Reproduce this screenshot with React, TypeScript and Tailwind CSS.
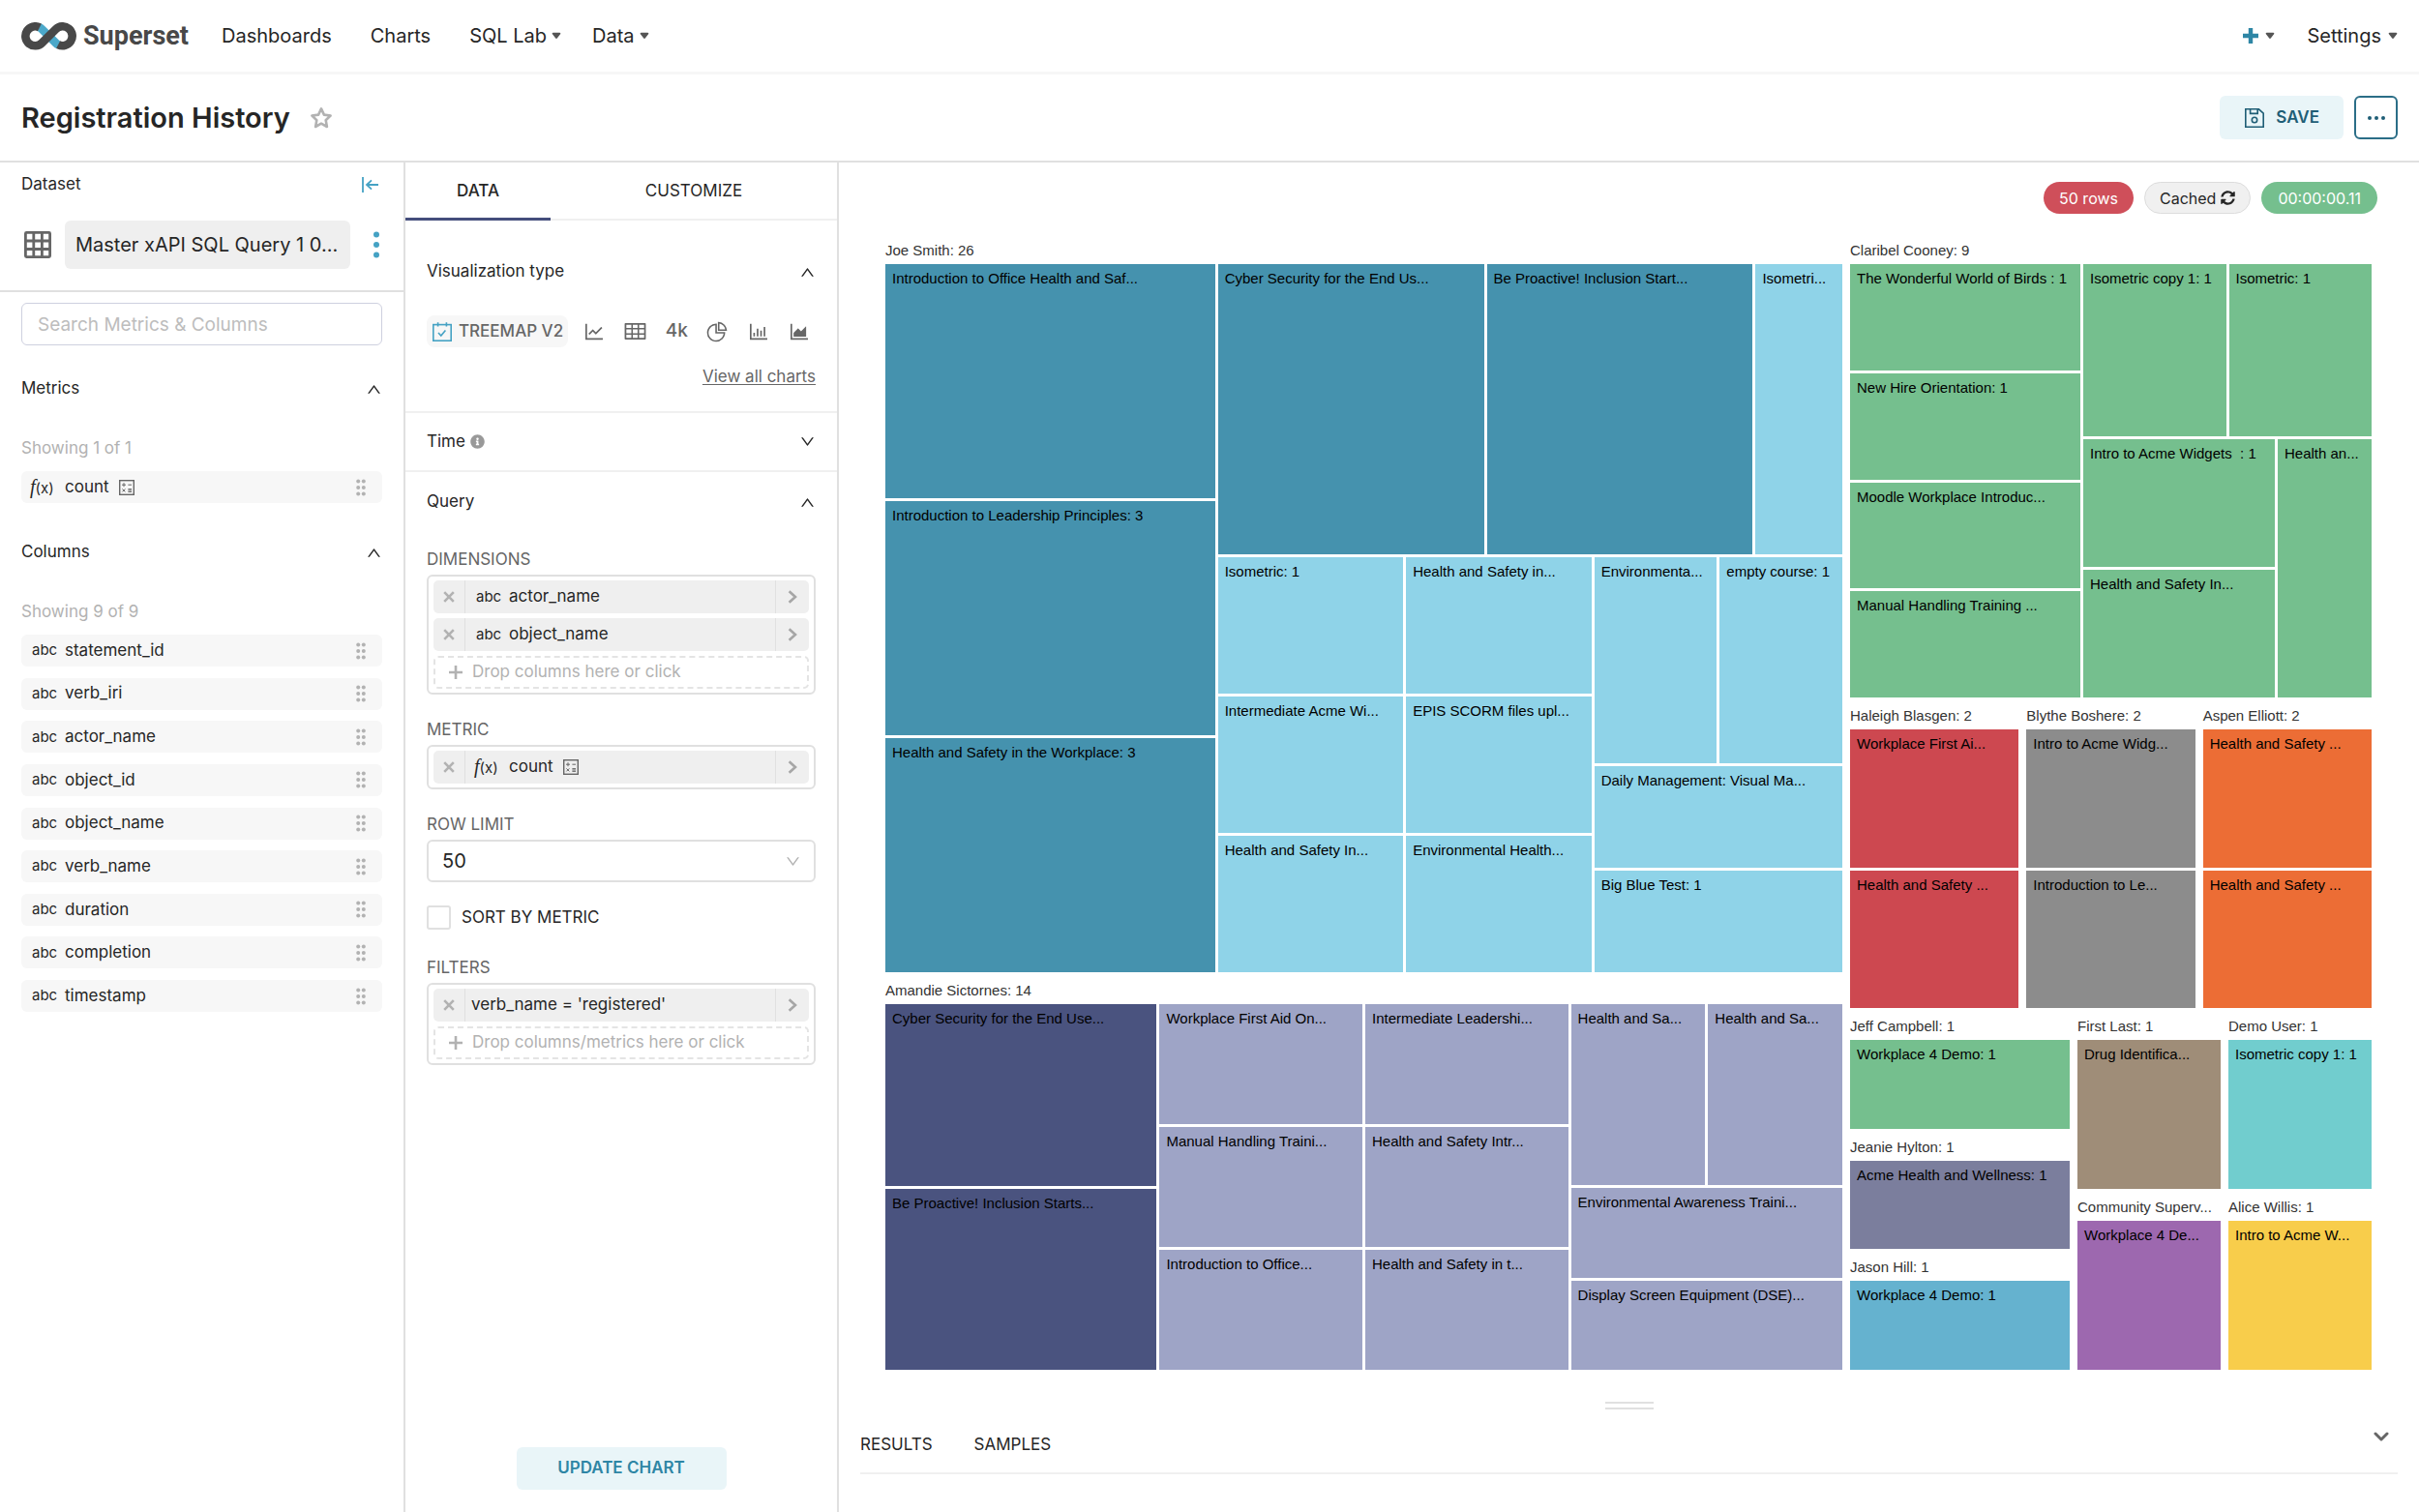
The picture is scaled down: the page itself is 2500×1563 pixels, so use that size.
import type { CSSProperties, ReactNode } from 'react';
import {
  AiOutlineAreaChart,
  AiOutlineBarChart,
  AiOutlineDown,
  AiOutlineLineChart,
  AiOutlinePieChart,
  AiOutlineTable,
  AiOutlineUp,
} from 'react-icons/ai';
import { FaInfoCircle, FaSyncAlt } from 'react-icons/fa';
import clsx from 'clsx';

interface Tile {
  size: number;
  label?: string;
  color?: string;
  /** A titled group gets a heading above its tiles. */
  title?: string;
  dir?: 'row' | 'col';
  wide?: boolean;
  children?: Tile[];
}

const TEAL = 'bg-[#4592ae]';
const SKY = 'bg-[#8fd3e8]';
const NAVY = 'bg-[#4a537f]';
const LAVENDER = 'bg-[#9ea4c6]';
const GREEN = 'bg-[#75bf8e]';
const RED = 'bg-[#cd4850]';
const GRAY = 'bg-[#8c8c8c]';
const ORANGE = 'bg-[#ec6d35]';

const leaf = (size: number, label: string, color: string): Tile => ({ size, label, color });
const col = (size: number, children: Tile[]): Tile => ({ size, dir: 'col', children });
const row = (size: number, children: Tile[]): Tile => ({ size, dir: 'row', children });
const group = (size: number, title: string, dir: 'row' | 'col', children: Tile[]): Tile => ({
  size,
  title,
  dir,
  children,
});

const treemap: Tile = {
  size: 1,
  dir: 'row',
  wide: true,
  children: [
    {
      size: 989,
      dir: 'col',
      wide: true,
      children: [
        group(760, 'Joe Smith: 26', 'row', [
          col(341, [
            leaf(1, 'Introduction to Office Health and Saf...', TEAL),
            leaf(1, 'Introduction to Leadership Principles: 3', TEAL),
            leaf(1, 'Health and Safety in the Workplace: 3', TEAL),
          ]),
          col(646, [
            row(300, [
              leaf(276, 'Cyber Security for the End Us...', TEAL),
              leaf(276, 'Be Proactive! Inclusion Start...', TEAL),
              leaf(90, 'Isometri...', SKY),
            ]),
            row(429, [
              col(192, [
                leaf(1, 'Isometric: 1', SKY),
                leaf(1, 'Intermediate Acme Wi...', SKY),
                leaf(1, 'Health and Safety In...', SKY),
              ]),
              col(192, [
                leaf(1, 'Health and Safety in...', SKY),
                leaf(1, 'EPIS SCORM files upl...', SKY),
                leaf(1, 'Environmental Health...', SKY),
              ]),
              col(257, [
                row(214, [leaf(1, 'Environmenta...', SKY), leaf(1, 'empty course: 1', SKY)]),
                leaf(106, 'Daily Management: Visual Ma...', SKY),
                leaf(106, 'Big Blue Test: 1', SKY),
              ]),
            ]),
          ]),
        ]),
        group(406, 'Amandie Sictornes: 14', 'row', [
          col(281, [
            leaf(1, 'Cyber Security for the End Use...', NAVY),
            leaf(1, 'Be Proactive! Inclusion Starts...', NAVY),
          ]),
          col(210, [
            leaf(1, 'Workplace First Aid On...', LAVENDER),
            leaf(1, 'Manual Handling Traini...', LAVENDER),
            leaf(1, 'Introduction to Office...', LAVENDER),
          ]),
          col(210, [
            leaf(1, 'Intermediate Leadershi...', LAVENDER),
            leaf(1, 'Health and Safety Intr...', LAVENDER),
            leaf(1, 'Health and Safety in t...', LAVENDER),
          ]),
          col(281, [
            row(188, [leaf(1, 'Health and Sa...', LAVENDER), leaf(1, 'Health and Sa...', LAVENDER)]),
            leaf(93, 'Environmental Awareness Traini...', LAVENDER),
            leaf(93, 'Display Screen Equipment (DSE)...', LAVENDER),
          ]),
        ]),
      ],
    },
    {
      size: 539,
      dir: 'col',
      wide: true,
      children: [
        group(476, 'Claribel Cooney: 9', 'row', [
          col(238, [
            leaf(1, 'The Wonderful World of Birds : 1', GREEN),
            leaf(1, 'New Hire Orientation: 1', GREEN),
            leaf(1, 'Moodle Workplace Introduc...', GREEN),
            leaf(1, 'Manual Handling Training ...', GREEN),
          ]),
          col(298, [
            row(178, [leaf(1, 'Isometric copy 1: 1', GREEN), leaf(1, 'Isometric: 1', GREEN)]),
            row(267, [
              col(198, [leaf(1, 'Intro to Acme Widgets  : 1', GREEN), leaf(1, 'Health and Safety In...', GREEN)]),
              leaf(97, 'Health an...', GREEN),
            ]),
          ]),
        ]),
        {
          size: 316,
          dir: 'row',
          wide: true,
          children: [
            group(1, 'Haleigh Blasgen: 2', 'col', [
              leaf(1, 'Workplace First Ai...', RED),
              leaf(1, 'Health and Safety ...', RED),
            ]),
            group(1, 'Blythe Boshere: 2', 'col', [
              leaf(1, 'Intro to Acme Widg...', GRAY),
              leaf(1, 'Introduction to Le...', GRAY),
            ]),
            group(1, 'Aspen Elliott: 2', 'col', [
              leaf(1, 'Health and Safety ...', ORANGE),
              leaf(1, 'Health and Safety ...', ORANGE),
            ]),
          ],
        },
        {
          size: 369,
          dir: 'row',
          wide: true,
          children: [
            {
              size: 227,
              dir: 'col',
              wide: true,
              children: [
                group(1, 'Jeff Campbell: 1', 'col', [leaf(1, 'Workplace 4 Demo: 1', GREEN)]),
                group(1, 'Jeanie Hylton: 1', 'col', [leaf(1, 'Acme Health and Wellness: 1', 'bg-[#7b7e9d]')]),
                group(1, 'Jason Hill: 1', 'col', [leaf(1, 'Workplace 4 Demo: 1', 'bg-[#65b2cf]')]),
              ],
            },
            {
              size: 148,
              dir: 'col',
              wide: true,
              children: [
                group(1, 'First Last: 1', 'col', [leaf(1, 'Drug Identifica...', 'bg-[#9f8d78]')]),
                group(1, 'Community Superv...', 'col', [leaf(1, 'Workplace 4 De...', 'bg-[#9d68af]')]),
              ],
            },
            {
              size: 148,
              dir: 'col',
              wide: true,
              children: [
                group(1, 'Demo User: 1', 'col', [leaf(1, 'Isometric copy 1: 1', 'bg-[#71cdce]')]),
                group(1, 'Alice Willis: 1', 'col', [leaf(1, 'Intro to Acme W...', 'bg-[#f8cd4b]')]),
              ],
            },
          ],
        },
      ],
    },
  ],
};

const columns = [
  'statement_id',
  'verb_iri',
  'actor_name',
  'object_id',
  'object_name',
  'verb_name',
  'duration',
  'completion',
  'timestamp',
];

function TreemapNode({ node }: { node: Tile }) {
  const style: CSSProperties = { flexGrow: node.size };

  if (!node.children) {
    return (
      <div style={style} className={clsx('min-h-0 min-w-0 basis-0 overflow-hidden', node.color)}>
        {/* the padding sits inside, so that it does not count in the tile's flex size */}
        <div className="whitespace-pre pl-[7px] pt-[5px] text-[15px] leading-5 text-black">{node.label}</div>
      </div>
    );
  }

  const tiles = node.children.map((child, i) => <TreemapNode key={i} node={child} />);
  const direction = node.dir === 'row' ? 'flex-row' : 'flex-col';

  if (node.title) {
    return (
      <section style={style} className="flex min-h-0 min-w-0 basis-0 flex-col">
        <h3 className="h-7 shrink-0 whitespace-nowrap text-[15px] leading-7 text-[#333333]">{node.title}</h3>
        <div className={clsx('flex min-h-0 flex-1 gap-[3px]', direction)}>{tiles}</div>
      </section>
    );
  }

  return (
    <div
      style={style}
      className={clsx(
        'flex min-h-0 min-w-0 basis-0',
        direction,
        node.wide ? 'gap-x-2 gap-y-[5px]' : 'gap-[3px]',
      )}
    >
      {tiles}
    </div>
  );
}

function Caret() {
  return (
    <svg viewBox="0 0 10 8" className="h-2 w-[10px] fill-[#555555]" aria-hidden="true">
      <path d="M1.6 0.8h6.8c0.9 0 1.2 0.9 0.7 1.5L5.8 6.6c-0.4 0.5-1.2 0.5-1.6 0L0.9 2.3C0.4 1.7 0.7 0.8 1.6 0.8z" />
    </svg>
  );
}

function Logo() {
  return (
    <a href="#" className="flex items-center gap-[7px]">
      <svg viewBox="0 0 57 29" className="h-[29px] w-[57px]" fill="none" strokeWidth="8.6" aria-hidden="true">
        <path d="M18.5 5.2A10 10 0 0 1 21.4 7.2L35.6 21.4A10 10 0 0 0 38.5 23.4" stroke="#4ba8c9" />
        <path d="M18.9 5.4A10 10 0 1 0 21.4 21.4L35.6 7.2A10 10 0 1 1 38.1 23.2" stroke="#484848" />
      </svg>
      <span className="font-['Roboto',sans-serif] text-[27px] font-bold leading-8 text-[#484848]">Superset</span>
    </a>
  );
}

function DatasetIcon() {
  return (
    <svg viewBox="0 0 28 28" className="size-7" fill="none" stroke="#666666" strokeWidth="2.8" aria-hidden="true">
      <rect x="1.4" y="1.4" width="25.2" height="25.2" rx="1" />
      <path d="M1 10h26M1 18.5h26M9.8 1v26M18.4 1v26" />
    </svg>
  );
}

function CalendarIcon() {
  return (
    <svg viewBox="0 0 20 20" className="size-5" fill="none" stroke="#45a2c4" strokeWidth="1.6" aria-hidden="true">
      <rect x="0.8" y="2.6" width="18.4" height="16.6" />
      <path d="M5.6 0.2v4.2M14.4 0.2v4.2M6 11l2.8 3 4.6-5.6" />
    </svg>
  );
}

function CalculatorIcon() {
  return (
    <svg viewBox="0 0 16 16" className="size-4" fill="none" stroke="#666666" aria-hidden="true">
      <rect x="0.7" y="0.7" width="14.6" height="14.6" strokeWidth="1.4" />
      <path d="M3 5.2h4M5 3.2v4M9.4 5.2h3.6M3.4 9.4l3 3M6.4 9.4l-3 3M9.4 9.6h3.6M9.4 11h3.6M9.4 12.4h3.6" />
    </svg>
  );
}

function DragHandle() {
  return (
    <svg viewBox="0 0 10 18" className="h-[18px] w-[10px] fill-[#b2b2b2]" aria-hidden="true">
      {[2.5, 9, 15.5].map(y => (
        <g key={y}>
          <circle cx="2.2" cy={y} r="2" />
          <circle cx="7.8" cy={y} r="2" />
        </g>
      ))}
    </svg>
  );
}

function CollapseIcon() {
  return (
    <svg viewBox="0 0 18 16" className="h-4 w-[18px]" fill="none" stroke="#45a2c4" strokeWidth="1.8" aria-hidden="true">
      <path d="M1 0v16M5 8h12M10 3.4L5 8l5 4.6" />
    </svg>
  );
}

function SaveIcon() {
  return (
    <svg viewBox="0 0 20 20" className="size-5" fill="none" stroke="#1f5e76" strokeWidth="1.6" aria-hidden="true">
      <path d="M0.8 0.8h13.6l4.8 4.4v14H0.8z" />
      <path d="M5.6 1v4.4h7.6V1" />
      <circle cx="10" cy="12" r="2.7" />
    </svg>
  );
}

function FunctionLabel() {
  return (
    <span className="-ml-0.5 w-[26px] whitespace-nowrap text-[15px] leading-5">
      <i className="font-['Liberation_Serif',serif] text-[20px]">f</i>(x)
    </span>
  );
}

function TypeLabel() {
  return <span className="w-6 text-[15px]">abc</span>;
}

function SectionHeading({ title, open = true, children }: { title: string; open?: boolean; children?: ReactNode }) {
  const Chevron = open ? AiOutlineUp : AiOutlineDown;
  return (
    <button type="button" aria-expanded={open} className="flex h-6 w-full items-center gap-[5px] text-left text-[17px]">
      {title}
      {children}
      <Chevron size={17} className="ml-auto" />
    </button>
  );
}

function FieldRow({ children }: { children: ReactNode }) {
  return (
    <li className="flex h-[33px] items-center gap-[10px] rounded-md bg-[#f7f7f7] pl-[11px] pr-[17px] text-[17px]">
      {children}
      <span className="ml-auto">
        <DragHandle />
      </span>
    </li>
  );
}

function ControlLabel({ children }: { children: ReactNode }) {
  return <h3 className="h-5 text-[17px] leading-5 text-[#666666]">{children}</h3>;
}

function DropBox({ children }: { children: ReactNode }) {
  return (
    <div className="mt-[6px] flex flex-col gap-[5px] rounded-md border-2 border-[#e0e0e0] px-[5px] py-1">{children}</div>
  );
}

function Pill({ children, narrow }: { children: ReactNode; narrow?: boolean }) {
  return (
    <div className="flex h-[34px] items-stretch rounded-[5px] bg-[#efefef] text-[17px]">
      <button type="button" aria-label="Remove" className="flex w-[33px] items-center justify-center border-r border-[#e0e0e0]">
        <svg viewBox="0 0 12 12" className="size-3" stroke="#b2b2b2" strokeWidth="2.6" aria-hidden="true">
          <path d="M1.2 1.2l9.6 9.6M10.8 1.2l-9.6 9.6" />
        </svg>
      </button>
      <div className={clsx('flex flex-1 items-center gap-[10px]', narrow ? 'pl-[6px]' : 'pl-[11px]')}>{children}</div>
      <button type="button" aria-label="Edit" className="flex w-[35px] items-center justify-center border-l border-[#e0e0e0]">
        <svg viewBox="0 0 10 14" className="h-[14px] w-[10px]" fill="none" stroke="#a6a6a6" strokeWidth="2.6" aria-hidden="true">
          <path d="M1.6 1.2L8 7l-6.4 5.8" />
        </svg>
      </button>
    </div>
  );
}

function DropTarget({ children }: { children: ReactNode }) {
  return (
    <button
      type="button"
      className="flex h-[34px] items-center gap-[10px] rounded-[5px] border-2 border-dashed border-[#e4e4e4] pl-[14px] text-[17px] text-[#b2b2b2]"
    >
      <svg viewBox="0 0 14 14" className="size-[14px]" stroke="#b2b2b2" strokeWidth="2.6" aria-hidden="true">
        <path d="M7 0v14M0 7h14" />
      </svg>
      {children}
    </button>
  );
}

function NavBar() {
  return (
    <header className="flex h-[77px] items-center justify-between border-b-[3px] border-[#f7f7f7] px-[22px] text-[20px]">
      <div className="flex items-center">
        <Logo />
        <nav className="ml-[34px] flex items-center gap-10">
          <a href="#">Dashboards</a>
          <a href="#">Charts</a>
          <button type="button" className="flex items-center gap-[5px]">
            SQL Lab <Caret />
          </button>
          <button type="button" className="-ml-2 flex items-center gap-[5px]">
            Data <Caret />
          </button>
        </nav>
      </div>
      <div className="flex items-center gap-[33px]">
        <button type="button" aria-label="New" className="flex items-center gap-[7px]">
          <svg viewBox="0 0 16 16" className="size-4" stroke="#2e86a5" strokeWidth="4.4" aria-hidden="true">
            <path d="M8 0v16M0 8h16" />
          </svg>
          <Caret />
        </button>
        <button type="button" className="flex items-center gap-[7px]">
          Settings <Caret />
        </button>
      </div>
    </header>
  );
}

function TitleBar() {
  return (
    <div className="flex h-[91px] items-center justify-between border-b-2 border-[#e0e0e0] px-[22px]">
      <div className="flex items-center gap-5">
        <h1 className="text-[29px] font-semibold">Registration History</h1>
        <button type="button" aria-label="Favorite">
          <svg viewBox="0 0 24 24" className="size-6" fill="none" stroke="#b2b2b2" strokeWidth="2.6" strokeLinejoin="round" aria-hidden="true">
            <path d="M12 2.4l2.9 6.2 6.7 0.9-4.9 4.7 1.2 6.8L12 17.7 6.1 21l1.2-6.8L2.4 9.5l6.7-0.9z" />
          </svg>
        </button>
      </div>
      <div className="flex items-center gap-[11px]">
        <button
          type="button"
          className="flex h-[45px] items-center gap-3 rounded-md bg-[#e9f5f8] pl-[26px] pr-[25px] text-[17px] font-semibold text-[#1f5e76]"
        >
          <SaveIcon />
          SAVE
        </button>
        <button
          type="button"
          aria-label="More actions"
          className="flex h-[45px] w-[45px] items-center justify-center rounded-md border-2 border-[#2b6e87]"
        >
          <svg viewBox="0 0 18 4" className="h-1 w-[18px] fill-[#1f5e76]" aria-hidden="true">
            <circle cx="2" cy="2" r="2" />
            <circle cx="9" cy="2" r="2" />
            <circle cx="16" cy="2" r="2" />
          </svg>
        </button>
      </div>
    </div>
  );
}

function DatasetPanel() {
  return (
    <aside className="w-[419px] shrink-0 border-r-2 border-[#e0e0e0]">
      <div className="border-b-2 border-[#e0e0e0] px-[22px] pb-[22px]">
        <div className="flex h-[46px] items-center justify-between pr-[3px]">
          <h2 className="text-[17px]">Dataset</h2>
          <button type="button" aria-label="Collapse panel">
            <CollapseIcon />
          </button>
        </div>
        <div className="mt-[14px] flex items-center">
          <span className="ml-[3px]">
            <DatasetIcon />
          </span>
          <button type="button" className="ml-[14px] h-[50px] flex-1 rounded-md bg-[#efefef] pl-[11px] text-left text-[20px]">
            Master xAPI SQL Query 1 0...
          </button>
          <button type="button" aria-label="Dataset actions" className="ml-6 mr-[3px]">
            <svg viewBox="0 0 6 28" className="h-7 w-[6px] fill-[#45a2c4]" aria-hidden="true">
              <circle cx="3" cy="3.5" r="3" />
              <circle cx="3" cy="14" r="3" />
              <circle cx="3" cy="24.5" r="3" />
            </svg>
          </button>
        </div>
      </div>
      <div className="px-[22px] pt-[11px]">
        <input
          type="text"
          aria-label="Search Metrics & Columns"
          placeholder="Search Metrics & Columns"
          className="h-[44px] w-full rounded-md border border-[#ced0df] px-4 text-[19px] placeholder:text-[#bdbdbd]"
        />
        <div className="mt-[33px]">
          <SectionHeading title="Metrics" />
        </div>
        <p className="mt-[37px] h-6 text-[17px] leading-6 text-[#b2b2b2]">Showing 1 of 1</p>
        <ul className="mt-3">
          <FieldRow>
            <FunctionLabel />
            count
            <CalculatorIcon />
          </FieldRow>
        </ul>
        <div className="mt-[39px]">
          <SectionHeading title="Columns" />
        </div>
        <p className="mt-[37px] h-6 text-[17px] leading-6 text-[#b2b2b2]">Showing 9 of 9</p>
        <ul className="mt-3 flex h-[390px] flex-col justify-between">
          {columns.map(name => (
            <FieldRow key={name}>
              <TypeLabel />
              {name}
            </FieldRow>
          ))}
        </ul>
      </div>
    </aside>
  );
}

function ControlsPanel() {
  return (
    <section className="flex w-[448px] shrink-0 flex-col border-r-2 border-[#e0e0e0] pb-[23px]">
      <div role="tablist" className="flex h-[60px] text-[17px]">
        <button type="button" role="tab" aria-selected="true" className="w-[150px] border-b-[3px] border-[#444e7c] pt-0.5 font-medium">
          DATA
        </button>
        <button type="button" role="tab" aria-selected="false" className="flex-1 border-b-2 border-[#f0f0f0] pt-0.5">
          CUSTOMIZE
        </button>
      </div>

      <div className="border-b-2 border-[#f0f0f0] px-[22px] pb-[23px] pt-[41px]">
        <SectionHeading title="Visualization type" />
        <div className="mt-[33px] flex items-center text-[#666666]">
          <button
            type="button"
            className="flex h-[33px] w-[146px] items-center gap-[7px] whitespace-nowrap rounded-lg bg-[#f7f7f7] pl-[6px] text-[17px] font-medium"
          >
            <CalendarIcon />
            TREEMAP V2
          </button>
          <div className="ml-[15px] mr-[5px] flex flex-1 items-center justify-between">
            <button type="button" aria-label="Line chart"><AiOutlineLineChart size={24} /></button>
            <button type="button" aria-label="Table"><AiOutlineTable size={25} /></button>
            <button type="button" aria-label="Big number" className="text-[19px] font-medium">4k</button>
            <button type="button" aria-label="Pie chart"><AiOutlinePieChart size={24} /></button>
            <button type="button" aria-label="Bar chart"><AiOutlineBarChart size={24} /></button>
            <button type="button" aria-label="Area chart"><AiOutlineAreaChart size={24} /></button>
          </div>
        </div>
        <div className="mt-[19px] flex h-6 items-center justify-end">
          <a href="#" className="text-[17px] text-[#666666] underline underline-offset-2">View all charts</a>
        </div>
      </div>

      <div className="flex h-[61px] items-center border-b-2 border-[#f0f0f0] px-[22px]">
        <SectionHeading title="Time" open={false}>
          <FaInfoCircle size={15} className="text-[#999999]" />
        </SectionHeading>
      </div>

      <div className="px-[22px] pt-[19px]">
        <SectionHeading title="Query" />
        <div className="mt-[37px]">
          <ControlLabel>DIMENSIONS</ControlLabel>
          <DropBox>
            <Pill><TypeLabel />actor_name</Pill>
            <Pill><TypeLabel />object_name</Pill>
            <DropTarget>Drop columns here or click</DropTarget>
          </DropBox>
        </div>
        <div className="mt-[26px]">
          <ControlLabel>METRIC</ControlLabel>
          <DropBox>
            <Pill><FunctionLabel />count<CalculatorIcon /></Pill>
          </DropBox>
        </div>
        <div className="mt-[26px]">
          <label htmlFor="row-limit" className="block h-5 text-[17px] leading-5 text-[#666666]">ROW LIMIT</label>
          <div className="relative mt-[6px]">
            <select id="row-limit" defaultValue="50" className="h-11 w-full appearance-none rounded-md border-2 border-[#e0e0e0] pl-[14px] text-[20px]">
              <option value="50">50</option>
            </select>
            <AiOutlineDown size={17} className="pointer-events-none absolute right-[15px] top-[14px] text-[#b2b2b2]" />
          </div>
        </div>
        <label className="mt-6 flex items-center gap-[11px] text-[17px]">
          <input type="checkbox" className="size-[25px] appearance-none rounded-[3px] border-2 border-[#e0e0e0]" />
          SORT BY METRIC
        </label>
        <div className="mt-[28px]">
          <ControlLabel>FILTERS</ControlLabel>
          <DropBox>
            <Pill narrow>verb_name = 'registered'</Pill>
            <DropTarget>Drop columns/metrics here or click</DropTarget>
          </DropBox>
        </div>
      </div>

      <button type="button" className="mx-auto mt-auto h-11 w-[217px] rounded-md bg-[#e9f5f8] text-[17px] font-semibold text-[#2e86a5]">
        UPDATE CHART
      </button>
    </section>
  );
}

function ChartPanel() {
  return (
    <main className="flex min-w-0 flex-1 flex-col">
      <div className="flex justify-end gap-[11px] pr-[43px] pt-5 text-[16px]">
        <span className="flex h-[33px] items-center rounded-full bg-[#cf4f5a] px-4 text-white">50 rows</span>
        <button type="button" className="flex h-[33px] items-center gap-[5px] rounded-full border border-[#dcdcdc] bg-[#f0f0f0] px-[15px]">
          Cached <FaSyncAlt size={15} />
        </button>
        <span className="flex h-[33px] items-center rounded-full bg-[#75bf8e] px-[17px] text-white">00:00:00.11</span>
      </div>

      <div className="ml-12 mr-[49px] mt-6 flex min-h-0 flex-1 font-['Liberation_Sans',Arial,sans-serif]">
        <TreemapNode node={treemap} />
      </div>

      <div className="mx-auto mt-[33px] h-2 w-[50px] border-y-2 border-[#e0e0e0]" />

      <div className="mx-[22px] mb-[39px] mt-2 flex h-[59px] items-center border-b-2 border-[#f0f0f0] text-[17px]">
        <button type="button">RESULTS</button>
        <button type="button" className="ml-[43px]">SAMPLES</button>
        <button type="button" aria-label="Collapse results" className="mb-[18px] ml-auto mr-[9px]">
          <svg viewBox="0 0 16 10" className="h-[10px] w-4" fill="none" stroke="#666666" strokeWidth="3" strokeLinecap="round" strokeLinejoin="round" aria-hidden="true">
            <path d="M2 2l6 6 6-6" />
          </svg>
        </button>
      </div>
    </main>
  );
}

export default function App() {
  return (
    <div className="flex min-h-screen flex-col bg-white font-['Inter',sans-serif] text-[#262626]">
      <NavBar />
      <TitleBar />
      <div className="flex flex-1">
        <DatasetPanel />
        <ControlsPanel />
        <ChartPanel />
      </div>
    </div>
  );
}
